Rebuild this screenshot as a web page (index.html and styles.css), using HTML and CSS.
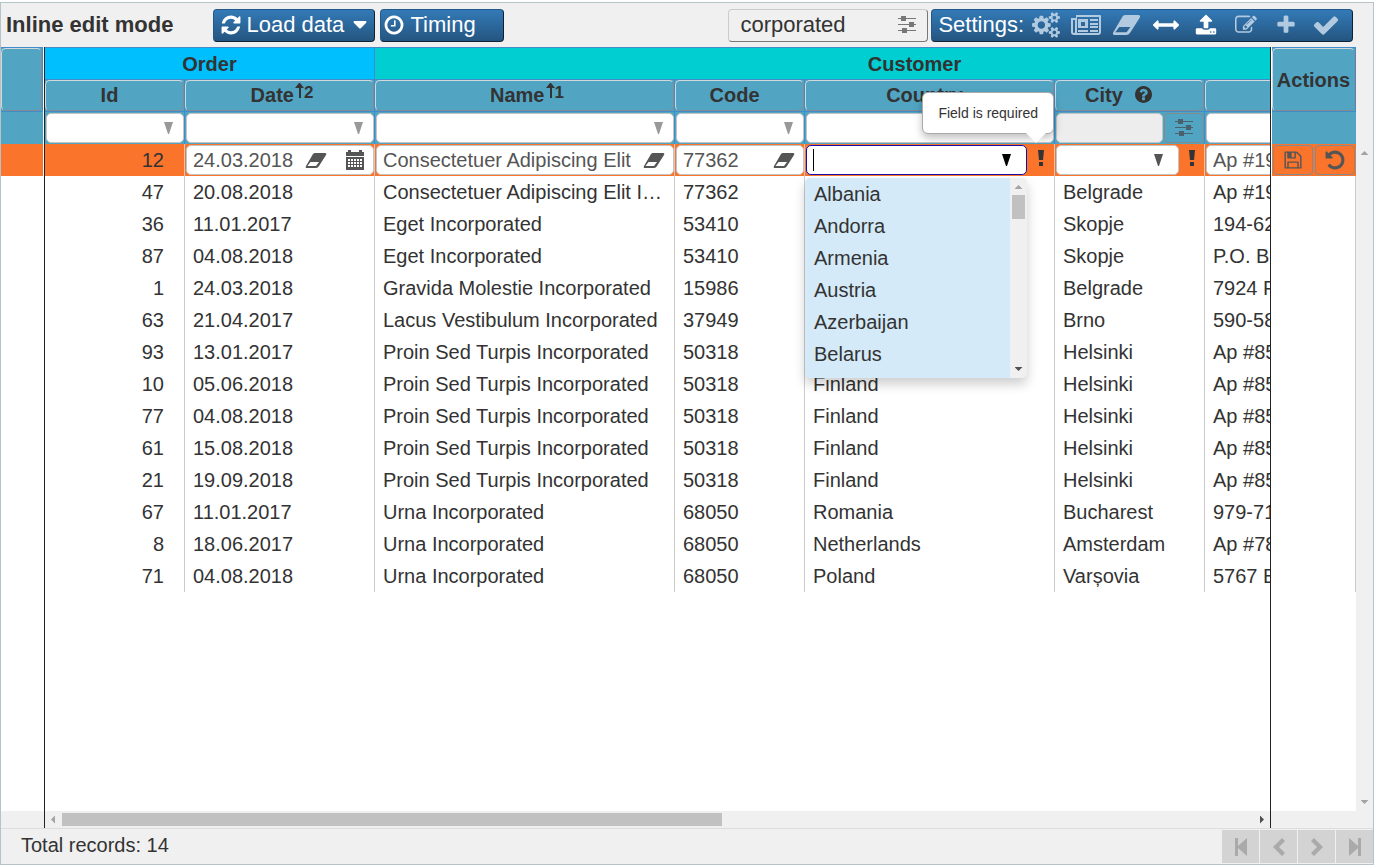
FILE: index.html
```html
<!DOCTYPE html>
<html lang="en">
<head>
<meta charset="utf-8">
<title>Inline edit mode</title>
<link rel="stylesheet" href="styles.css">
</head>
<body>
<svg class="defs" aria-hidden="true">
  <symbol id="i-refresh" viewBox="0 0 1792 1792"><path d="M1639 1056q0 5-1 7-64 268-268 434.5t-478 166.5q-146 0-282.500-55t-243.500-157l-129 129q-19 19-45 19t-45-19-19-45v-448q0-26 19-45t45-19h448q26 0 45 19t19 45-19 45l-137 137q71 66 161 102t187 36q134 0 250-65t186-179q11-17 53-117 8-23 30-23h192q13 0 22.500 9.500t9.500 22.500zm25-800v448q0 26-19 45t-45 19h-448q-26 0-45-19t-19-45 19-45l138-138q-148-137-349-137-134 0-250 65t-186 179q-11 17-53 117-8 23-30 23h-199q-13 0-22.500-9.500t-9.500-22.500v-7q65-268 270-434.500t480-166.500q146 0 284 55.500t245 156.500l130-129q19-19 45-19t45 19 19 45z"/></symbol>
  <symbol id="i-clock" viewBox="0 0 1792 1792"><path d="M1024 544v448q0 14-9 23t-23 9h-320q-14 0-23-9t-9-23v-64q0-14 9-23t23-9h224v-352q0-14 9-23t23-9h64q14 0 23 9t9 23zm416 352q0-148-73-273t-198-198-273-73-273 73-198 198-73 273 73 273 198 198 273 73 273-73 198-198 73-273zm224 0q0 209-103 385.500t-279.500 279.500-385.500 103-385.500-103-279.500-279.500-103-385.500 103-385.500 279.500-279.500 385.500-103 385.500 103 279.500 279.500 103 385.500z"/></symbol>
  <symbol id="i-eraser" viewBox="0 0 22 15"><path fill-rule="evenodd" d="M10 0H20Q22 0 21 2L14 13Q13 15 11 15H2Q0 15 1 13L8 1Q9 0 10 0ZM5.500 9L2.500 13H11L14 9Z"/></symbol>
  <symbol id="i-cogs" viewBox="-64 0 1920 1792"><path d="M832 896q0-106-75-181t-181-75-181 75-75 181 75 181 181 75 181-75 75-181zm768 512q0-52-38-90t-90-38-90 38-38 90q0 53 37.500 90.500t90.500 37.500 90.500-37.500 37.500-90.500zm0-1024q0-52-38-90t-90-38-90 38-38 90q0 53 37.500 90.500t90.500 37.500 90.500-37.500 37.500-90.500zm-384 421v185q0 10-7 19.500t-16 10.500l-155 24q-11 35-32 76 34 48 90 115 7 11 7 20 0 12-7 19-23 30-82.500 89.500t-78.500 59.500q-11 0-21-7l-115-90q-37 19-77 31-11 108-23 155-7 24-30 24h-186q-11 0-20-7.500t-10-17.500l-23-153q-34-10-75-31l-118 89q-7 7-20 7-11 0-21-8-144-133-144-160 0-9 7-19 10-14 41-53t47-61q-23-44-35-82l-152-24q-10-1-17-9.500t-7-19.500v-185q0-10 7-19.500t16-10.500l155-24q11-35 32-76-34-48-90-115-7-11-7-20 0-12 7-20 22-30 82-89t79-59q11 0 21 7l115 90q34-18 77-32 11-108 23-154 7-24 30-24h186q11 0 20 7.500t10 17.500l23 153q34 10 75 31l118-89q8-7 20-7 11 0 21 8 144 133 144 160 0 8-7 19-12 16-42 54t-45 60q23 48 34 82l152 23q10 2 17 10.500t7 19.500zm640 533v140q0 16-149 31-12 27-30 52 51 113 51 138 0 4-4 7-122 71-124 71-8 0-46-47t-52-68q-20 2-30 2t-30-2q-14 21-52 68t-46 47q-2 0-124-71-4-3-4-7 0-25 51-138-18-25-30-52-149-15-149-31v-140q0-16 149-31 13-29 30-52-51-113-51-138 0-4 4-7 4-2 35-20t59-34 30-16q8 0 46 46.500t52 67.500q20-2 30-2t30 2q51-71 92-112l6-2q4 0 124 70 4 3 4 7 0 25-51 138 17 23 30 52 149 15 149 31zm0-1024v140q0 16-149 31-12 27-30 52 51 113 51 138 0 4-4 7-122 71-124 71-8 0-46-47t-52-68q-20 2-30 2t-30-2q-14 21-52 68t-46 47q-2 0-124-71-4-3-4-7 0-25 51-138-18-25-30-52-149-15-149-31v-140q0-16 149-31 13-29 30-52-51-113-51-138 0-4 4-7 4-2 35-20t59-34 30-16q8 0 46 46.500t52 67.500q20-2 30-2t30 2q51-71 92-112l6-2q4 0 124 70 4 3 4 7 0 25-51 138 17 23 30 52 149 15 149 31z"/></symbol>
  <symbol id="i-news" viewBox="0 0 30 22"><path fill-rule="evenodd" d="M5 1H29Q30 1 30 2V18Q30 21 27 21H3Q0 21 0 18V4H5ZM6 3V19H27Q28 19 28 18V3ZM2 6V18Q2 19 3 19T4 18V6ZM7 5H17V14H7ZM10 8V12H14V8ZM7 16H17V18H7ZM19 5H27V7H19ZM19 9H27V11H19ZM19 12H27V14H19ZM19 16H27V18H19Z"/></symbol>
  <symbol id="i-arrows" viewBox="0 0 1792 1792"><path d="M1792 896q0 26-19 45l-256 256q-19 19-45 19t-45-19-19-45v-128h-1024v128q0 26-19 45t-45 19-45-19l-256-256q-19-19-19-45t19-45l256-256q19-19 45-19t45 19 19 45v128h1024v-128q0-26 19-45t45-19 45 19l256 256q19 19 19 45z"/></symbol>
  <symbol id="i-upload" viewBox="0 0 1792 1792"><path d="M1344 1472q0-26-19-45t-45-19-45 19-19 45 19 45 45 19 45-19 19-45zm256 0q0-26-19-45t-45-19-45 19-19 45 19 45 45 19 45-19 19-45zm128-224v320q0 40-28 68t-68 28h-1472q-40 0-68-28t-28-68v-320q0-40 28-68t68-28h427q21 56 70.500 92t110.500 36h256q61 0 110.500-36t70.500-92h427q40 0 68 28t28 68zm-325-648q-17 40-59 40h-256v448q0 26-19 45t-45 19h-256q-26 0-45-19t-19-45v-448h-256q-42 0-59-40-17-39 14-69l448-448q18-19 45-19t45 19l448 448q31 30 14 69z"/></symbol>
  <symbol id="i-edit" viewBox="0 0 1792 1792"><path d="M888 1184l116-116-152-152-116 116v56h96v96h56zm440-720q-16-16-33 1l-350 350q-17 17-1 33t33-1l350-350q17-17 1-33zm80 594v190q0 119-84.500 203.500t-203.500 84.500h-832q-119 0-203.500-84.500t-84.500-203.500v-832q0-119 84.500-203.500t203.500-84.500h832q63 0 117 25 15 7 18 23 3 17-9 29l-49 49q-14 14-32 8-23-6-45-6h-832q-66 0-113 47t-47 113v832q0 66 47 113t113 47h832q66 0 113-47t47-113v-126q0-13 9-22l64-64q15-15 35-7t20 29zm-96-738l288 288-672 672h-288v-288zm444 132l-92 92-288-288 92-92q28-28 68-28t68 28l152 152q28 28 28 68t-28 68z"/></symbol>
  <symbol id="i-plus" viewBox="0 0 1792 1792"><path d="M1600 736v192q0 40-28 68t-68 28h-416v416q0 40-28 68t-68 28h-192q-40 0-68-28t-28-68v-416h-416q-40 0-68-28t-28-68v-192q0-40 28-68t68-28h416v-416q0-40 28-68t68-28h192q40 0 68 28t28 68v416h416q40 0 68 28t28 68z"/></symbol>
  <symbol id="i-check" viewBox="0 0 1792 1792"><path d="M1671 566q0 40-28 68l-724 724-136 136q-28 28-68 28t-68-28l-136-136-362-362q-28-28-28-68t28-68l136-136q28-28 68-28t68 28l294 295 656-657q28-28 68-28t68 28l136 136q28 28 28 68z"/></symbol>
  <symbol id="i-help" viewBox="128 128 1536 1536"><path d="M1024 1376v-192q0-14-9-23t-23-9h-192q-14 0-23 9t-9 23v192q0 14 9 23t23 9h192q14 0 23-9t9-23zm256-672q0-88-55.500-163t-138.500-116-170-41q-243 0-371 213-15 24 8 42l132 100q7 6 19 6 16 0 25-12 53-68 86-92 34-24 86-24 48 0 85.500 26t37.500 59q0 38-20 61t-68 45q-63 28-115.500 86.500t-52.500 125.500v36q0 14 9 23t23 9h192q14 0 23-9t9-23q0-19 21.500-49.500t54.500-49.500q32-18 49-28.500t46-35 44.500-48 28-60.500 12.500-81zm384 192q0 209-103 385.500t-279.500 279.500-385.500 103-385.500-103-279.500-279.500-103-385.500 103-385.500 279.500-279.500 385.500-103 385.500 103 279.500 279.500 103 385.500z"/></symbol>
  <symbol id="i-save" viewBox="0 0 1792 1792"><path d="M512 1536h768v-384h-768v384zm896 0h128v-896q0-14-10-38.500t-20-34.500l-281-281q-10-10-34-20t-39-10v416q0 40-28 68t-68 28h-576q-40 0-68-28t-28-68v-416h-128v1280h128v-416q0-40 28-68t68-28h832q40 0 68 28t28 68v416zm-384-928v-320q0-13-9.500-22.500t-22.500-9.500h-192q-13 0-22.500 9.500t-9.500 22.500v320q0 13 9.500 22.500t22.500 9.500h192q13 0 22.500-9.500t9.500-22.500zm640 32v928q0 40-28 68t-68 28h-1344q-40 0-68-28t-28-68v-1344q0-40 28-68t68-28h928q40 0 88 20t76 48l280 280q28 28 48 76t20 88z"/></symbol>
  <symbol id="i-undo" viewBox="0 0 1792 1792"><path d="M1664 896q0 156-61 298t-164 245-245 164-298 61q-172 0-327-72.500t-264-204.500q-7-10-6.500-22.500t8.500-20.500l137-138q10-9 25-9 16 2 23 12 73 95 179 147t225 52q104 0 198.500-40.500t163.500-109.500 109.500-163.500 40.500-198.500-40.500-198.500-109.500-163.500-163.500-109.500-198.500-40.500q-98 0-188 35.500t-160 101.500l137 138q31 30 14 69-17 40-59 40h-448q-26 0-45-19t-19-45v-448q0-42 40-59 39-17 69 14l130 129q107-101 244.500-156.500t284.500-55.500q156 0 298 61t245 164 164 245 61 298z"/></symbol>
  <symbol id="i-sliders" viewBox="0 0 20 20"><path d="M1 3H19V4H1ZM1 9H19V10H1ZM1 15H19V16H1ZM4 1H9V6H4ZM12 7H17V12H12ZM5 13H10V18H5Z"/></symbol>
  <symbol id="i-calendar" viewBox="0 0 20 20"><path fill-rule="evenodd" d="M1 2H3V0H6V2H14V0H17V2H19V6H1ZM1 7H19V20H1ZM3 9V11H5V9ZM6 9V11H8V9ZM9 9V11H11V9ZM12 9V11H14V9ZM15 9V11H17V9ZM3 12V14H5V12ZM6 12V14H8V12ZM9 12V14H11V12ZM12 12V14H14V12ZM15 12V14H17V12ZM3 15V17H5V15ZM6 15V17H8V15ZM9 15V17H11V15ZM12 15V17H14V15ZM15 15V17H17V15Z"/></symbol>
  <symbol id="i-drop" viewBox="0 0 9 12"><path d="M0 0H9L5 12H4Z"/></symbol>
  <symbol id="i-caret" viewBox="0 0 14 8"><path d="M1 0H13Q14 1 13 2L8 7Q7 8 6 7L1 2Q0 1 1 0Z"/></symbol>
  <symbol id="i-sort" viewBox="0 0 9 15"><path d="M4 0H5L9 5H6V15H4V5H0Z"/></symbol>
  <symbol id="i-bang" viewBox="0 0 6 16"><path d="M0 0H6L5 10H1ZM1 12H5V16H1Z"/></symbol>
  <symbol id="i-first" viewBox="0 0 20 20"><path d="M4 1H7V9L16 1V19L7 11V19H4Z"/></symbol>
  <symbol id="i-prev" viewBox="0 0 20 20"><path d="M13 1L16 4L10 10L16 16L13 19L4 10Z"/></symbol>
</svg>

<main class="app">
  <header class="toolbar">
    <h1 class="title">Inline edit mode</h1>
    <button class="btn btn-load" type="button"><svg class="ic22"><use href="#i-refresh"/></svg><span>Load data</span><svg class="caret"><use href="#i-caret"/></svg></button>
    <button class="btn btn-timing" type="button"><svg class="ic22"><use href="#i-clock"/></svg><span>Timing</span></button>
    <div class="search">
      <input type="text" value="corporated" aria-label="Search">
      <button class="plain" type="button" aria-label="Search options"><svg class="ic20"><use href="#i-sliders"/></svg></button>
    </div>
    <div class="btn settings" role="toolbar" aria-label="Settings">
      <span>Settings:</span>
      <div class="tools">
        <button type="button" class="tool off" aria-label="Options"><svg class="cogs"><use href="#i-cogs"/></svg></button>
        <button type="button" class="tool off" aria-label="View"><svg class="news"><use href="#i-news"/></svg></button>
        <button type="button" class="tool off" aria-label="Clear"><svg class="erase-big"><use href="#i-eraser"/></svg></button>
        <button type="button" class="tool" aria-label="Fit width"><svg class="ic26"><use href="#i-arrows"/></svg></button>
        <button type="button" class="tool" aria-label="Upload"><svg class="ic22"><use href="#i-upload"/></svg></button>
        <button type="button" class="tool off" aria-label="Edit"><svg class="ic22"><use href="#i-edit"/></svg></button>
        <button type="button" class="tool off" aria-label="Add"><svg class="ic22"><use href="#i-plus"/></svg></button>
        <button type="button" class="tool off" aria-label="Confirm"><svg class="ic28"><use href="#i-check"/></svg></button>
      </div>
    </div>
  </header>

  <div class="grid">
    <div class="pane pane-left">
      <div class="pane-body">
        <table>
          <thead>
            <tr class="double"><th><div class="head"></div></th></tr>
            <tr class="filter"><td></td></tr>
          </thead>
          <tbody><tr class="edit"><td></td></tr></tbody>
        </table>
      </div>
      <div class="hbar"></div>
    </div>

    <div class="pane pane-center">
      <div class="pane-body">
        <table>
          <colgroup><col class="c-id"><col class="c-date"><col class="c-name"><col class="c-code"><col class="c-country"><col class="c-city"><col class="c-address"></colgroup>
          <thead>
            <tr class="groups"><th class="g-order" colspan="2">Order</th><th class="g-customer" colspan="5">Customer</th></tr>
            <tr class="heads">
              <th><div class="head">Id</div></th>
              <th><div class="head sorted">Date<svg class="sort"><use href="#i-sort"/></svg><span class="order">2</span></div></th>
              <th><div class="head sorted">Name<svg class="sort"><use href="#i-sort"/></svg><span class="order">1</span></div></th>
              <th><div class="head">Code</div></th>
              <th><div class="head">Country</div></th>
              <th><div class="head helped">City<svg class="help"><use href="#i-help"/></svg></div></th>
              <th><div class="head"></div></th>
            </tr>
            <tr class="filter">
              <td><div class="field"><input type="text" aria-label="Filter Id"><svg class="drop"><use href="#i-drop"/></svg></div></td>
              <td><div class="field"><input type="text" aria-label="Filter Date"><svg class="drop"><use href="#i-drop"/></svg></div></td>
              <td><div class="field"><input type="text" aria-label="Filter Name"><svg class="drop"><use href="#i-drop"/></svg></div></td>
              <td><div class="field"><input type="text" aria-label="Filter Code"><svg class="drop"><use href="#i-drop"/></svg></div></td>
              <td><div class="field"><input type="text" aria-label="Filter Country"></div></td>
              <td><div class="cell"><div class="field disabled"><input type="text" aria-label="Filter City" disabled></div><button class="square" type="button" aria-label="City filter options"><svg class="ic20"><use href="#i-sliders"/></svg></button></div></td>
              <td><div class="field"><input type="text" aria-label="Filter Address"></div></td>
            </tr>
          </thead>
          <tbody>
            <tr class="edit">
              <td class="num">12</td>
              <td><div class="field with-icons"><input type="text" value="24.03.2018" aria-label="Date"><span class="icons"><svg class="erase"><use href="#i-eraser"/></svg><svg class="ic20"><use href="#i-calendar"/></svg></span></div></td>
              <td><div class="field with-icons"><input type="text" value="Consectetuer Adipiscing Elit" aria-label="Name"><svg class="erase"><use href="#i-eraser"/></svg></div></td>
              <td><div class="field with-icons"><input type="text" value="77362" aria-label="Code"><svg class="erase"><use href="#i-eraser"/></svg></div></td>
              <td class="anchor">
                <div class="cell"><div class="field active"><span class="cursor"></span><input type="text" role="combobox" aria-expanded="true" aria-controls="countries" aria-label="Country"><svg class="drop"><use href="#i-drop"/></svg></div><span class="bang"><svg><use href="#i-bang"/></svg></span></div>
                <div class="tip" role="tooltip">Field is required</div>
                <div class="menu">
                  <ul id="countries" role="listbox" aria-label="Countries">
                    <li role="option">Albania</li><li role="option">Andorra</li><li role="option">Armenia</li><li role="option">Austria</li><li role="option">Azerbaijan</li><li role="option">Belarus</li>
                  </ul>
                  <div class="vbar"><i class="up"></i><i class="thumb"></i><i class="down dark"></i></div>
                </div>
              </td>
              <td><div class="cell"><div class="field"><input type="text" aria-label="City"><svg class="drop"><use href="#i-drop"/></svg></div><span class="bang"><svg><use href="#i-bang"/></svg></span></div></td>
              <td><div class="field"><input type="text" value="Ap #19" aria-label="Address"></div></td>
            </tr>
            <tr><td class="num">47</td><td>20.08.2018</td><td>Consectetuer Adipiscing Elit Incorporated</td><td>77362</td><td></td><td>Belgrade</td><td>Ap #19</td></tr>
            <tr><td class="num">36</td><td>11.01.2017</td><td>Eget Incorporated</td><td>53410</td><td></td><td>Skopje</td><td>194-62</td></tr>
            <tr><td class="num">87</td><td>04.08.2018</td><td>Eget Incorporated</td><td>53410</td><td></td><td>Skopje</td><td>P.O. B</td></tr>
            <tr><td class="num">1</td><td>24.03.2018</td><td>Gravida Molestie Incorporated</td><td>15986</td><td></td><td>Belgrade</td><td>7924 F</td></tr>
            <tr><td class="num">63</td><td>21.04.2017</td><td>Lacus Vestibulum Incorporated</td><td>37949</td><td></td><td>Brno</td><td>590-58</td></tr>
            <tr><td class="num">93</td><td>13.01.2017</td><td>Proin Sed Turpis Incorporated</td><td>50318</td><td></td><td>Helsinki</td><td>Ap #85</td></tr>
            <tr><td class="num">10</td><td>05.06.2018</td><td>Proin Sed Turpis Incorporated</td><td>50318</td><td>Finland</td><td>Helsinki</td><td>Ap #85</td></tr>
            <tr><td class="num">77</td><td>04.08.2018</td><td>Proin Sed Turpis Incorporated</td><td>50318</td><td>Finland</td><td>Helsinki</td><td>Ap #85</td></tr>
            <tr><td class="num">61</td><td>15.08.2018</td><td>Proin Sed Turpis Incorporated</td><td>50318</td><td>Finland</td><td>Helsinki</td><td>Ap #85</td></tr>
            <tr><td class="num">21</td><td>19.09.2018</td><td>Proin Sed Turpis Incorporated</td><td>50318</td><td>Finland</td><td>Helsinki</td><td>Ap #85</td></tr>
            <tr><td class="num">67</td><td>11.01.2017</td><td>Urna Incorporated</td><td>68050</td><td>Romania</td><td>Bucharest</td><td>979-71</td></tr>
            <tr><td class="num">8</td><td>18.06.2017</td><td>Urna Incorporated</td><td>68050</td><td>Netherlands</td><td>Amsterdam</td><td>Ap #78</td></tr>
            <tr><td class="num">71</td><td>04.08.2018</td><td>Urna Incorporated</td><td>68050</td><td>Poland</td><td>Varșovia</td><td>5767 E</td></tr>
          </tbody>
        </table>
      </div>
      <div class="hbar"><i class="left"></i><i class="thumb"></i><i class="right"></i></div>
    </div>

    <div class="pane pane-right">
      <div class="pane-body">
        <table>
          <thead>
            <tr class="double"><th><div class="head tight">Actions</div></th></tr>
            <tr class="filter"><td></td></tr>
          </thead>
          <tbody>
            <tr class="edit"><td><div class="cell"><button class="square" type="button" aria-label="Save"><svg class="ic20"><use href="#i-save"/></svg></button><button class="square" type="button" aria-label="Undo"><svg class="ic22"><use href="#i-undo"/></svg></button></div></td></tr>
            <tr><td></td></tr><tr><td></td></tr><tr><td></td></tr><tr><td></td></tr><tr><td></td></tr><tr><td></td></tr><tr><td></td></tr><tr><td></td></tr><tr><td></td></tr><tr><td></td></tr><tr><td></td></tr><tr><td></td></tr><tr><td></td></tr>
          </tbody>
        </table>
      </div>
      <div class="hbar"></div>
    </div>

    <div class="scroll"><i class="up"></i><i class="down"></i></div>
  </div>

  <footer class="footer">
    <span class="total">Total records: 14</span>
    <nav class="pager" aria-label="Pages">
      <button type="button" disabled aria-label="First page"><svg class="ic20"><use href="#i-first"/></svg></button>
      <button type="button" disabled aria-label="Previous page"><svg class="ic20"><use href="#i-prev"/></svg></button>
      <button type="button" disabled aria-label="Next page"><svg class="ic20 flip"><use href="#i-prev"/></svg></button>
      <button type="button" disabled aria-label="Last page"><svg class="ic20 flip"><use href="#i-first"/></svg></button>
    </nav>
  </footer>
</main>
</body>
</html>
```

FILE: styles.css
```css
* { box-sizing: border-box; }

body {
  display: flex;
  flex-direction: column;
  height: 100vh;
  margin: 0;
  padding: 2px 2px 1px 0;
  background: #fff;
  color: #333;
  font: 20px/24px "Liberation Sans", Arial, sans-serif;
}

button, input { font: inherit; color: inherit; }
button { padding: 0; background: none; border: 0; }
svg { display: block; flex: none; fill: currentColor; }
.defs { position: absolute; width: 0; height: 0; }

.ic20 { width: 20px; height: 20px; }
.ic22 { width: 22px; height: 22px; }
.ic26 { width: 26px; height: 26px; }
.ic28 { width: 28px; height: 28px; }
.cogs { width: 28px; height: 26px; }
.news { width: 30px; height: 22px; }
.erase-big { width: 29px; height: 20px; }
.erase { width: 22px; height: 15px; }
.caret { width: 14px; height: 8px; }
.drop { width: 9px; height: 12px; }
.help { width: 17px; height: 17px; }
.sort { width: 9px; height: 15px; }
.flip { transform: scaleX(-1); }

.app {
  display: flex;
  flex: 1;
  flex-direction: column;
  min-height: 0;
  background: #f0f0f0;
  border: 1px solid #b7c3ca;
}

/* Toolbar */
.toolbar {
  display: flex;
  align-items: center;
  gap: 5px;
  height: 44px;
  padding: 0 20px 0 5px;
  font-size: 22px;
}
.title { margin: 0 35px 0 0; font-size: 22px; white-space: nowrap; }
.btn {
  display: flex;
  align-items: center;
  height: 33px;
  padding: 0 7px 0 6px;
  color: #fff;
  white-space: nowrap;
  background: linear-gradient(#337ab7, #245580);
  border: 1px solid;
  border-color: #23588a #0d2236 #0d2236 #23588a;
  border-radius: 4px;
}
.btn-load { gap: 4px; width: 162px; }
.btn-load .caret { margin-left: auto; }
.btn-timing { gap: 5px; width: 124px; padding-left: 2px; }
.search {
  display: flex;
  align-items: center;
  width: 200px;
  height: 33px;
  margin-left: auto;
  padding: 0 10px 0 11px;
  border: 1px solid;
  border-color: #ccc #777 #777 #ccc;
  border-radius: 4px;
}
.search input, .field input {
  flex: 1;
  min-width: 0;
  width: 0;
  padding: 0;
  border: 0;
  outline: 0;
  background: transparent;
}
.plain { color: #777; }
.settings { gap: 2px; margin-left: -2px; padding-right: 6px; }
.tools { display: flex; }
.tool { display: grid; place-items: center; width: 40px; height: 31px; color: #fff; }
.off { color: #b2cae0; }

/* Grid */
.grid { display: flex; flex: 1; min-height: 0; }
.pane { display: flex; flex-direction: column; background: #fff; }
.pane-body { flex: 1; min-height: 0; overflow: hidden; border-top: 1px solid #428bca; }
.pane-left { width: 44px; border-right: 1px solid #222; }
.pane-left .pane-body { margin-right: 1px; }
.pane-center { flex: 1; min-width: 0; }
.pane-right { width: 86px; border-left: 1px solid #222; }
.pane-right .pane-body { margin-left: 1px; }

table { width: 100%; table-layout: fixed; border-collapse: separate; border-spacing: 0; }
.pane-center table { width: 1410px; }
.c-id { width: 140px; }
.c-date { width: 190px; }
.c-name { width: 300px; }
.c-code { width: 130px; }
.c-country { width: 250px; }
.c-city { width: 150px; }
.c-address { width: 250px; }

th, td { height: 32px; padding: 0; }
th {
  background: #51a5c3;
  border: solid #428bca;
  border-width: 0 1px 1px 0;
}
.double th { height: 64px; }
th.g-order { background: #00bfff; }
th.g-customer { background: #00ced1; }
.head {
  display: flex;
  align-items: center;
  justify-content: center;
  height: 31px;
  padding: 0 10px 2px 0;
  border: 1px solid;
  border-color: #d2d8db #858c90 #858c90 #d2d8db;
  border-radius: 5px;
}
.double .head { height: 63px; }
.sorted { padding: 0 0 2px 5px; }
.sort { align-self: flex-start; margin: 2px 0 0 1px; }
.order { font-size: 17px; line-height: 20px; margin-bottom: 4px; }
.helped { gap: 12px; padding-right: 22px; }
.tight { padding: 0; }

td {
  padding: 0 8px;
  border-right: 1px solid #ccc;
  white-space: nowrap;
  overflow: hidden;
  text-overflow: ellipsis;
}
td.num { padding-right: 20px; text-align: right; }
.pane-left td { border-right: 0; }
.filter td { padding: 1px 0 1px 1px; background: #51a5c3; border-color: #428bca; }
.filter td, .edit td { overflow: visible; }
.edit td { padding: 1px 0 1px 1px; background: #fa742b; }
.edit td.num { padding-right: 20px; }
.pane-right .filter td, .pane-right .edit td { border-right: 0; }

.cell { display: flex; gap: 1px; }
.field {
  display: flex;
  flex: 1;
  align-items: center;
  min-width: 0;
  height: 30px;
  padding: 0 10px 0 6px;
  background: #fff;
  border: 1px solid #c4c4c4;
  border-radius: 5px;
}
.field.disabled { background: #ededed; }
.filter .drop { color: #999; }
.edit .field { color: #555; }
.icons { display: flex; align-items: center; gap: 18px; }
.edit .with-icons { padding-right: 8px; }
.edit .cell { gap: 0; }
.edit .cell .field { padding-right: 15px; }
.edit .field.active { color: #000; border-color: #1a0dab; }
.cursor { width: 1px; height: 22px; background: #000; }
.bang { display: flex; flex: none; justify-content: center; width: 27px; padding-top: 5px; }
.bang svg { width: 6px; height: 16px; }
.edit td:nth-child(6) .bang { width: 25px; }
.square {
  display: grid;
  place-items: center;
  width: 40px;
  height: 30px;
  color: #555;
  border: 1px solid #828b8f;
  border-radius: 4px;
}
.filter .square { color: #48616c; }
.pane-right .edit .cell { gap: 2px; }

/* Error hint and country list */
.anchor { position: relative; }
.tip {
  position: absolute;
  right: 0;
  bottom: 42px;
  z-index: 3;
  height: 42px;
  padding: 0 15px;
  color: #333;
  font-size: 14px;
  line-height: 40px;
  background: #fff;
  border: 1px solid #aaa;
  border-radius: 6px;
  box-shadow: 0 4px 8px rgba(0, 0, 0, .25);
}
.tip::after {
  content: "";
  position: absolute;
  right: 7px;
  top: 100%;
  width: 20px;
  height: 10px;
  background: #fff;
  clip-path: polygon(0 0, 100% 0, 50% 100%);
}
.menu {
  position: absolute;
  left: 0;
  top: 34px;
  z-index: 2;
  display: flex;
  width: 222px;
  height: 200px;
  overflow: hidden;
  background: #d4eaf8;
  border-radius: 5px;
  box-shadow: 0 6px 12px rgba(0, 0, 0, .2);
}
.menu ul { flex: 1; margin: 0; padding: 0; list-style: none; }
.menu li { padding: 0 9px; line-height: 32px; }

/* Scroll bars */
.vbar, .scroll { display: flex; flex-direction: column; align-items: center; width: 17px; background: #f0f0f0; }
.vbar { padding: 7px 0; }
.vbar .thumb { width: 13px; height: 24px; margin-top: 6px; background: #c1c1c1; }
.scroll { padding: 104px 0 24px; }
.hbar { display: flex; align-items: center; height: 17px; padding: 0 6px; background: #f0f0f0; }
.hbar .thumb { flex: 0 0 660px; height: 13px; margin-left: 7px; background: #c1c1c1; }
.up, .down { width: 8px; height: 4px; background: #a3a3a3; clip-path: polygon(50% 0, 100% 100%, 0 100%); }
.down { margin-top: auto; clip-path: polygon(0 0, 100% 0, 50% 100%); }
.down.dark { background: #505050; }
.left, .right { width: 4px; height: 8px; background: #a3a3a3; clip-path: polygon(0 50%, 100% 0, 100% 100%); }
.right { margin-left: auto; background: #505050; clip-path: polygon(0 0, 100% 50%, 0 100%); }

/* Footer */
.footer {
  display: flex;
  justify-content: space-between;
  height: 36px;
  padding: 1px 0 1px 20px;
  border-top: 1px solid #ddd;
}
.total { line-height: 30px; }
.pager { display: flex; gap: 1px; }
.pager button { display: grid; place-items: center; width: 37px; background: #d3d3d3; color: #aaa; }
```
